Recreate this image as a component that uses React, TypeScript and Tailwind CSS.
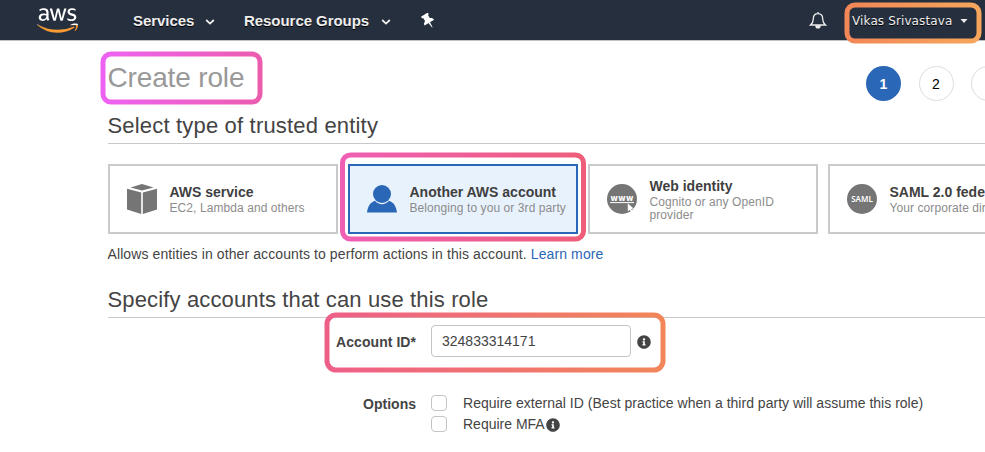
import React from "react";
import { FaAws, FaInfoCircle } from "react-icons/fa";

const Chevron = () => (
  <svg viewBox="0 0 10 8" className="mt-px h-2 w-2.5">
    <path d="M1.2 2 L5 5.6 L8.8 2" fill="none" stroke="#eee" strokeWidth="1.8" />
  </svg>
);

const Pin = () => (
  <svg viewBox="0 0 14 16" className="h-4 w-3.5">
    <g transform="rotate(-32 7 7.5)" fill="#fff">
      <path d="M3 0.6 H11 V2.4 L9.8 3.2 V6.4 C11.6 7.2 12.6 8.4 12.6 10 H1.4 C1.4 8.4 2.4 7.2 4.2 6.4 V3.2 L3 2.4 Z" />
      <path d="M6.1 9.8 H7.9 L7.3 15.6 H6.7 Z" />
    </g>
  </svg>
);

const Cube = () => (
  <svg viewBox="0 0 30 30" className="h-[30px] w-[30px]" fill="#757575">
    <path d="M15 0 L26.5 3.4 L15 6.6 L3.5 3.4 Z" />
    <path d="M0 4.8 L14.2 8.6 V30 L0 25.6 Z" />
    <path d="M30 4.8 L15.8 8.6 V30 L30 25.6 Z" />
  </svg>
);

const Person = () => (
  <svg viewBox="0 0 30 30" className="h-[30px] w-[30px]" fill="#2a67b7">
    <circle cx="15" cy="10" r="9" />
    <path d="M0 28.5 C0.6 23 3.2 18.2 8 16.8 C11.5 21.4 18.5 21.4 22 16.8 C26.8 18.2 29.4 23 30 28.5 Z" />
  </svg>
);

const Www = () => (
  <svg viewBox="0 0 30 30" className="h-[30px] w-[30px]">
    <circle cx="15" cy="15" r="15" fill="#757575" />
    <text x="15" y="17.3" textAnchor="middle" textLength="23" fontFamily="DejaVu Sans, sans-serif" fontWeight="700" fontSize="8" fill="#fff">www</text>
    <path d="M3 18.6 H27" stroke="#fff" strokeWidth="1" />
    <path d="M20.8 19.2 V27.4 L22.7 25.7 L24.3 28 L25.6 27.2 L24.2 24.9 L26.6 24.6 Z" fill="#fff" />
  </svg>
);

const Saml = () => (
  <svg viewBox="0 0 30 30" className="h-[30px] w-[30px]">
    <circle cx="15" cy="15" r="15" fill="#757575" />
    <text x="15" y="18" textAnchor="middle" textLength="21.5" fontFamily="Noto Sans, sans-serif" fontWeight="600" fontSize="8" fill="#fff">SAML</text>
  </svg>
);

type CardProps = {
  icon: React.ReactNode;
  title: string;
  text: string;
  selected?: boolean;
};

const Card = ({ icon, title, text, selected }: CardProps) => (
  <div
    className={`flex h-[70px] w-[230px] shrink-0 items-center border-2 pl-[17px] ${
      selected ? "border-[#2a67b7] bg-[#e8f2fd]" : "border-[#cacaca] bg-white"
    }`}
  >
    <div className="shrink-0">{icon}</div>
    <div className="ml-[12.5px] w-[160px] pt-px">
      <div className="text-[14px] leading-[17px] font-bold whitespace-nowrap text-[#3f3f3f]">{title}</div>
      <div className="mt-px text-[12px] leading-[13px] tracking-[0.08px] text-[#8c8c8c]">{text}</div>
    </div>
  </div>
);

const Checkbox = () => <span className="-mt-px h-4 w-4 rounded-[4px] border border-[#c4c4c4] bg-white" />;

/* Highlight frames drawn above the page */
const Highlights = () => (
  <svg className="pointer-events-none absolute top-0 left-0" width="985" height="452" fill="none" strokeWidth="5">
    <defs>
      <linearGradient id="h1">
        <stop offset="0" stopColor="#ee62f2" />
        <stop offset="1" stopColor="#ec5cae" />
      </linearGradient>
      <linearGradient id="h2">
        <stop offset="0" stopColor="#ef5fb4" />
        <stop offset="1" stopColor="#ee5e7a" />
      </linearGradient>
      <linearGradient id="h3">
        <stop offset="0" stopColor="#ee5f88" />
        <stop offset="1" stopColor="#f28659" />
      </linearGradient>
      <linearGradient id="h4">
        <stop offset="0" stopColor="#f28757" />
        <stop offset="1" stopColor="#f5a65c" />
      </linearGradient>
    </defs>
    <rect x="103" y="54" width="157" height="48" rx="8" stroke="url(#h1)" />
    <rect x="342.5" y="155" width="241" height="84" rx="8" stroke="url(#h2)" />
    <rect x="327" y="315" width="336" height="55" rx="9" stroke="url(#h3)" />
    <rect x="847" y="5" width="132" height="36" rx="8" stroke="url(#h4)" />
  </svg>
);

export default function App() {
  return (
    <div className="relative h-[452px] w-[985px] overflow-hidden bg-white font-['Liberation_Sans',Arial,sans-serif] text-[#444]">
      <header className="flex h-10 items-center bg-[#262f3e] pl-[37px] text-[#eee]">
        <div className="flex h-[33px] w-[41px] flex-col">
          <div className="h-[21px] overflow-hidden">
            <FaAws className="h-[33px] w-[41px] text-white" />
          </div>
          <div className="h-3 overflow-hidden">
            <FaAws className="-mt-[21px] h-[33px] w-[41px] text-[#f79b34]" />
          </div>
        </div>
        <nav className="mt-0.5 ml-[55px] flex items-center text-[15px] font-bold tracking-[-0.05px] [text-shadow:0_1px_0_#000]">
          <span className="w-[72px]">Services</span>
          <Chevron />
          <span className="ml-[29px] w-[137px]">Resource Groups</span>
          <Chevron />
        </nav>
        <span className="mt-0.5 ml-[30px]">
          <Pin />
        </span>
        <svg viewBox="0 0 18 18" className="ml-[374px] h-[18px] w-[18px]" fill="none" stroke="#eee" strokeWidth="1.3">
          <path d="M9 1 V2.5 M1.5 14 C3.5 12.3 4.3 11 4.3 8 C4.3 4.5 6 2.7 9 2.7 C12 2.7 13.7 4.5 13.7 8 C13.7 11 14.5 12.3 16.5 14 Z" />
          <path d="M7 15 C7 17.6 11 17.6 11 15 Z" fill="#eee" />
        </svg>
        <span className="mt-px ml-[25px] w-[108px] text-[12px] tracking-[0.12px] whitespace-nowrap font-['DejaVu_Sans',sans-serif] [text-shadow:0_1px_0_#000]">
          Vikas Srivastava
        </span>
        <svg viewBox="0 0 8 5" className="mt-0.5 h-[5px] w-2 shrink-0">
          <path d="M0.5 0 H7.5 L4 4 Z" fill="#eee" />
        </svg>
      </header>
      <div className="h-px bg-[#bfc3c3]" />

      <main className="pl-[107.5px]">
        <div className="flex h-[72px] items-start">
          <h1 className="mt-[21px] w-[758.5px] shrink-0 text-[28px] leading-8 tracking-[-0.15px] text-[#999]">Create role</h1>
          <div className="mt-[25px] flex shrink-0 gap-[17.5px] text-[14px] text-black">
            <span className="flex h-[35px] w-[35px] items-center justify-center rounded-full bg-[#2a67b7] pt-px font-bold text-white">1</span>
            <span className="flex h-[35px] w-[35px] items-center justify-center rounded-full border border-[#ddd] pt-px">2</span>
            <span className="h-[35px] w-[35px] rounded-full border border-[#ddd]" />
          </div>
        </div>

        <h2 className="h-[31px] border-b border-[#c8c8c8] text-[22px] leading-[25px] tracking-[0.18px]">
          Select type of trusted entity
        </h2>
        <div className="mt-5 ml-[0.5px] flex gap-[10px]">
          <Card icon={<Cube />} title="AWS service" text="EC2, Lambda and others" />
          <Card icon={<Person />} title="Another AWS account" text="Belonging to you or 3rd party" selected />
          <Card icon={<Www />} title="Web identity" text="Cognito or any OpenID provider" />
          <Card icon={<Saml />} title="SAML 2.0 federation" text="Your corporate directory" />
        </div>
        <p className="mt-[10px] text-[14px] leading-5 tracking-[0.1px]">
          Allows entities in other accounts to perform actions in this account.{" "}
          <a className="text-[#2a67b7]">Learn more</a>
        </p>

        <h2 className="mt-[23px] h-[31px] border-b border-[#c8c8c8] text-[22px] leading-[25px] tracking-[0.14px]">
          Specify accounts that can use this role
        </h2>
        <div className="mt-[7px] flex h-8 items-center text-[14px]">
          <label className="mt-0.5 w-[308.5px] text-right font-bold tracking-[0.05px]">Account ID*</label>
          <div className="ml-[15px] flex h-8 w-[200px] items-center rounded-[4px] border border-[#c4c4c4] bg-white pl-[10px] text-[14px]">
            324833314171
          </div>
          <FaInfoCircle className="mt-0.5 ml-[6px] h-[14px] w-[14px]" />
        </div>
        <div className="mt-[36px] flex text-[14px] leading-[21px]">
          <span className="mt-px w-[308.5px] text-right font-bold">Options</span>
          <div className="ml-[15px]">
            <div className="flex h-[21px] items-center">
              <Checkbox />
              <span className="ml-4 tracking-[0.015px]">Require external ID (Best practice when a third party will assume this role)</span>
            </div>
            <div className="flex h-[21px] items-center">
              <Checkbox />
              <span className="ml-4">Require MFA</span>
              <FaInfoCircle className="mt-px ml-px h-[14px] w-[14px]" />
            </div>
          </div>
        </div>
      </main>
      <Highlights />
    </div>
  );
}
